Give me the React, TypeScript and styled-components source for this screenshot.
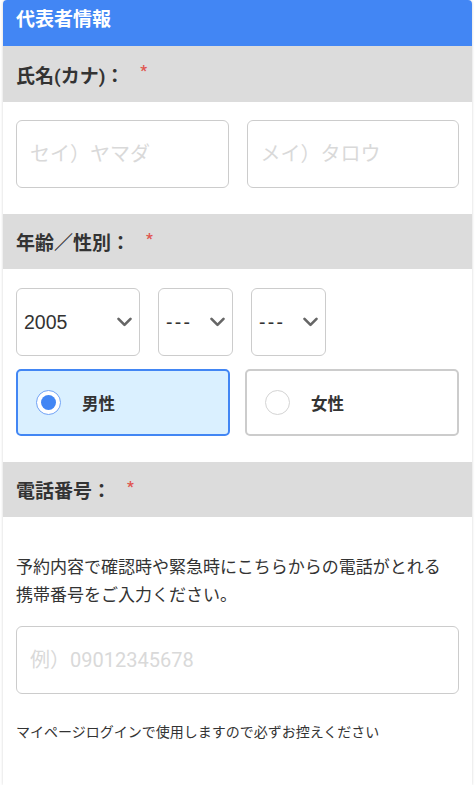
import React from "react";
import styled, { createGlobalStyle } from "styled-components";

const Global = createGlobalStyle`
  html, body { margin: 0; padding: 0; background: #ffffff; }
  body { font-family: Roboto, "Noto Sans CJK JP", sans-serif; color: #333; }
  * { box-sizing: border-box; }
`;

const Card = styled.div`
  margin: 0 3px;
  min-height: 785px;
  background: #fff;
  border-radius: 4px 4px 0 0;
  box-shadow: 0 0 3px rgba(0, 0, 0, 0.18);
  overflow: hidden;
`;

const Header = styled.div`
  background: #4286f4;
  color: #fff;
  font-size: 19px;
  font-weight: 700;
  line-height: 28px;
  padding: 6px 13px 12px;
`;

const Band = styled.div<{ $h?: number }>`
  background: #dcdcdc;
  height: ${(p) => p.$h ?? 55}px;
  display: flex;
  align-items: center;
  padding: 0 13px;
  font-size: 19px;
  font-weight: 700;
  color: #333;
`;

const Req = styled.span`
  color: #e0554f;
  font-size: 15px;
  font-weight: 700;
  margin-left: 16px;
  align-self: center;
  transform: translateY(-3px);
`;

const Body = styled.div<{ $pt: number; $pb: number }>`
  padding: ${(p) => p.$pt}px 13px ${(p) => p.$pb}px;
`;

const Row2 = styled.div<{ $gap: number }>`
  display: grid;
  grid-template-columns: 1fr 1fr;
  gap: ${(p) => p.$gap}px;
`;

const TextInput = styled.input`
  display: block;
  width: 100%;
  height: 68px;
  border: 1px solid #cccccc;
  border-radius: 6px;
  padding: 0 13px;
  font-family: Roboto, "Noto Sans CJK JP", sans-serif;
  font-size: 20px;
  color: #333;
  background: #fff;
  outline: none;
  &::placeholder { color: #d9d9d9; }
`;

const SelectRow = styled.div`
  display: flex;
  gap: 18px;
`;

const SelectWrap = styled.div<{ $w: number }>`
  position: relative;
  width: ${(p) => p.$w}px;
  height: 68px;
`;

const Select = styled.select<{ $spaced?: boolean }>`
  appearance: none;
  -webkit-appearance: none;
  width: 100%;
  height: 100%;
  border: 1px solid #cccccc;
  border-radius: 6px;
  background: #fff;
  padding: 0 26px 0 7px;
  font-family: "Liberation Sans", Arial, sans-serif;
  font-size: 19.5px;
  letter-spacing: ${(p) => (p.$spaced ? "2.3px" : "0")};
  color: #333;
  outline: none;
`;

const Chevron = styled.svg`
  position: absolute;
  right: 8px;
  top: 50%;
  margin-top: -5px;
  pointer-events: none;
`;

const RadioRow = styled.div`
  display: grid;
  grid-template-columns: 1fr 1fr;
  gap: 15px;
  margin-top: 13px;
`;

const RadioBox = styled.label<{ $on: boolean }>`
  height: 67px;
  border: 2px solid ${(p) => (p.$on ? "#4286f4" : "#cccccc")};
  background: ${(p) => (p.$on ? "#daf0ff" : "#ffffff")};
  border-radius: 5px;
  display: flex;
  align-items: center;
  padding-left: 18px;
  gap: 21px;
  font-size: 16.5px;
  font-weight: 700;
  color: #333;
`;

const Circle = styled.span<{ $on: boolean }>`
  width: 25px;
  height: 25px;
  border-radius: 50%;
  background: #fff;
  border: 1.5px solid ${(p) => (p.$on ? "#6fa2f6" : "#d4d4d4")};
  display: flex;
  align-items: center;
  justify-content: center;
  &::after {
    content: "";
    display: ${(p) => (p.$on ? "block" : "none")};
    width: 15px;
    height: 15px;
    border-radius: 50%;
    background: #4286f4;
  }
`;

const Note = styled.p`
  margin: 0 0 17px;
  font-size: 17px;
  line-height: 28px;
  color: #333;
`;

const Small = styled.p`
  margin: 28px 0 0;
  font-size: 14px;
  line-height: 20px;
  color: #333;
`;

const ChevronIcon = () => (
  <Chevron width="15" height="10" viewBox="0 0 15 10">
    <path d="M1.5 1.8 L7.5 7.8 L13.5 1.8" fill="none" stroke="#666" strokeWidth="2.6" strokeLinecap="round" strokeLinejoin="round" />
  </Chevron>
);

export default function App() {
  return (
    <>
      <Global />
      <Card>
        <Header>代表者情報</Header>
        <Band $h={56}>
          氏名(カナ)：<Req>*</Req>
        </Band>
        <Body $pt={18} $pb={26}>
          <Row2 $gap={18}>
            <TextInput placeholder="セイ）ヤマダ" />
            <TextInput placeholder="メイ）タロウ" />
          </Row2>
        </Body>
        <Band>
          年齢／性別：<Req>*</Req>
        </Band>
        <Body $pt={19} $pb={26}>
          <SelectRow>
            <SelectWrap $w={124}>
              <Select defaultValue="2005">
                <option value="2005">2005</option>
              </Select>
              <ChevronIcon />
            </SelectWrap>
            <SelectWrap $w={75}>
              <Select defaultValue="" $spaced>
                <option value="">---</option>
              </Select>
              <ChevronIcon />
            </SelectWrap>
            <SelectWrap $w={75}>
              <Select defaultValue="" $spaced>
                <option value="">---</option>
              </Select>
              <ChevronIcon />
            </SelectWrap>
          </SelectRow>
          <RadioRow>
            <RadioBox $on={true}>
              <Circle $on={true} />
              男性
            </RadioBox>
            <RadioBox $on={false}>
              <Circle $on={false} />
              女性
            </RadioBox>
          </RadioRow>
        </Body>
        <Band>
          電話番号：<Req>*</Req>
        </Band>
        <Body $pt={36} $pb={30}>
          <Note>
            予約内容で確認時や緊急時にこちらからの電話がとれる
            <br />
            携帯番号をご入力ください。
          </Note>
          <TextInput placeholder="例）09012345678" />
          <Small>マイページログインで使用しますので必ずお控えください</Small>
        </Body>
      </Card>
    </>
  );
}
